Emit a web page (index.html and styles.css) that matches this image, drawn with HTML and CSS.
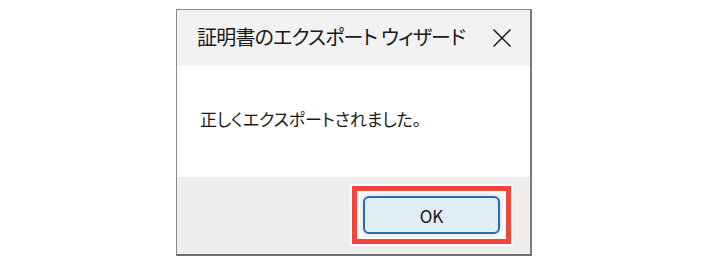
FILE: index.html
```html
<!DOCTYPE html>
<html lang="ja">
<head>
<meta charset="utf-8">
<title>証明書のエクスポート ウィザード</title>
<link rel="stylesheet" href="styles.css">
</head>
<body>
<div class="dialog">
  <div class="titlebar">
    <span class="title">証明書のエクスポート ウィザード</span>
    <span class="close" aria-label="閉じる">
      <svg width="20" height="20" viewBox="0 0 20 20"><path d="M1.5 1.5 L18.5 18.5 M18.5 1.5 L1.5 18.5" stroke="#1a1a1a" stroke-width="1.5" fill="none"/></svg>
    </span>
  </div>
  <div class="content">
    <p class="message">正しくエクスポートされました。</p>
  </div>
  <div class="footer">
    <div class="highlight">
      <button class="ok">OK</button>
    </div>
  </div>
</div>
</body>
</html>
```
FILE: styles.css
```css
html, body {
  margin: 0;
  padding: 0;
  background: #ffffff;
}
body {
  font-family: "Noto Sans CJK JP", "Noto Sans", sans-serif;
  color: #1a1a1a;
}
.dialog {
  box-sizing: border-box;
  margin: 9px 0 0 176px;
  width: 356px;
  height: 247px;
  border: 1px solid #8a8a8a;
  border-right: 2px solid #7a7a7a;
  border-bottom: 2px solid #6e6e6e;
  display: flex;
  flex-direction: column;
}
.titlebar {
  height: 56px;
  background: #f2f2f2;
  display: flex;
  align-items: center;
  justify-content: space-between;
  padding: 0 18px 0 20px;
}
.title {
  font-size: 20px;
  font-feature-settings: "palt";
  letter-spacing: -0.8px;
  line-height: 1;
  padding-bottom: 2px;
}
.close {
  display: flex;
  width: 20px;
  height: 20px;
}
.content {
  height: 111px;
  background: #ffffff;
  padding-left: 23px;
}
.message {
  margin: 0;
  padding-top: 42px;
  font-size: 17px;
  line-height: 22px;
  letter-spacing: -0.1px;
  font-feature-settings: "palt";
}
.footer {
  flex: 1;
  background: #efeeec;
  display: flex;
  justify-content: flex-end;
  align-items: flex-start;
  padding: 9px 19px 0 0;
}
.highlight {
  border: 5px solid #f4433a;
  background: #ffffff;
  padding: 5px 6px;
  box-shadow: 0 0 0 2px #ffffff;
  display: flex;
}
.ok {
  box-sizing: border-box;
  width: 137px;
  height: 38px;
  border: 2px solid #1c6db5;
  border-radius: 6px;
  background: #e1edf4;
  box-shadow: 0 0 0 3px #efeeec;
  font-family: "Noto Sans CJK JP", "Noto Sans", sans-serif;
  font-size: 17px;
  color: #1a1a1a;
  padding: 0;
  margin: 0;
}
```
